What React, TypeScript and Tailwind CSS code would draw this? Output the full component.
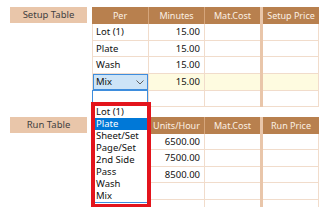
import React from "react";

const LINE = "border-[#f1dccb]";

type Row = { per: string; val: string; hl?: boolean; combo?: boolean };

function Chevron() {
  return (
    <svg width="8" height="5" viewBox="0 0 8 5" className="shrink-0">
      <path d="M0.5 0.5 L4 4 L7.5 0.5" fill="none" stroke="#606060" strokeWidth="1" />
    </svg>
  );
}

function Section({
  label,
  headers,
  rows,
  heights,
}: {
  label: string;
  headers: string[];
  rows: Row[];
  heights: number[];
}) {
  return (
    <div className="flex items-start">
      <div className="ml-[10px] w-[77px] h-[16px] bg-[#e9c6aa] flex items-center justify-center text-[#3f3f3f] text-[9.5px]">
        {label}
      </div>
      <div className="ml-[5px] flex flex-col">
        <div className="flex h-[17px] bg-[#b8804e] text-[#fbf0e4] text-[9px]">
          <div className="w-[57px] border-r border-[#d5a57b] flex items-center justify-center">{headers[0]}</div>
          <div className="w-[56px] border-r border-[#d5a57b] flex items-center justify-center">{headers[1]}</div>
          <div className="w-[55px] flex items-center justify-center">{headers[2]}</div>
          <div className="w-[3px] bg-[#e9c6aa]" />
          <div className="w-[56px] flex items-center justify-center">{headers[3]}</div>
        </div>
        {rows.map((r, i) => (
          <div key={i} className="flex text-[#111] text-[9.5px]" style={{ height: heights[i] }}>
            <div className={`w-[57px] border-l border-r border-b ${LINE} ${r.combo ? "" : "pl-[3px]"} flex items-center`}>
              {r.combo ? (
                <div className="w-full h-full bg-[#cde4f7] border border-[#3e8ddd] flex items-center justify-between pl-[2px] pr-[3px]">
                  <span>{r.per}</span>
                  <Chevron />
                </div>
              ) : (
                r.per
              )}
            </div>
            <div className={`w-[56px] border-r border-b ${LINE} ${r.hl ? "bg-[#fefbe0]" : ""} flex items-center justify-end pr-[4px]`}>
              {r.val}
            </div>
            <div className={`w-[55px] border-b ${LINE} ${r.hl ? "bg-[#fefbe0]" : ""}`} />
            <div className="w-[3px] bg-[#e9c6aa]" />
            <div className={`w-[56px] border-r border-b ${LINE} ${r.hl ? "bg-[#fefbe0]" : ""}`} />
          </div>
        ))}
      </div>
    </div>
  );
}

const items = ["Lot (1)", "Plate", "Sheet/Set", "Page/Set", "2nd Side", "Pass", "Wash", "Mix"];

export default function App() {
  return (
    <div className="relative w-[330px] h-[207px] bg-white overflow-hidden font-['Noto_Sans',sans-serif] leading-none">
      <div className="flex flex-col pt-[7px] gap-[10px]">
        <Section
          label="Setup Table"
          headers={["Per", "Minutes", "Mat.Cost", "Setup Price"]}
          heights={[17, 16, 17, 17, 16]}
          rows={[
            { per: "Lot (1)", val: "15.00" },
            { per: "Plate", val: "15.00" },
            { per: "Wash", val: "15.00" },
            { per: "Mix", val: "15.00", hl: true, combo: true },
            { per: "", val: "" },
          ]}
        />
        <Section
          label="Run Table"
          headers={["Per", "Units/Hour", "Mat.Cost", "Run Price"]}
          heights={[16, 17, 16, 17, 16]}
          rows={[
            { per: "", val: "6500.00" },
            { per: "", val: "7500.00" },
            { per: "", val: "8500.00" },
            { per: "", val: "" },
            { per: "", val: "" },
          ]}
        />
      </div>

      {/* dropdown list */}
      <div className="absolute left-[92px] top-[90px] w-[56px] bg-white border border-[#3e8ddd] pt-[15px] text-[9.5px] text-[#111]">
        {items.map((it) => (
          <div
            key={it}
            className={`h-[12px] flex items-center pl-[3px] ${it === "Plate" ? "bg-[#0078d7] text-white" : ""}`}
          >
            {it}
          </div>
        ))}
      </div>

      {/* red annotation */}
      <div className="absolute left-[91px] top-[102px] w-[60px] h-[106px] border-[4px] border-[#e3141c]" />
    </div>
  );
}
